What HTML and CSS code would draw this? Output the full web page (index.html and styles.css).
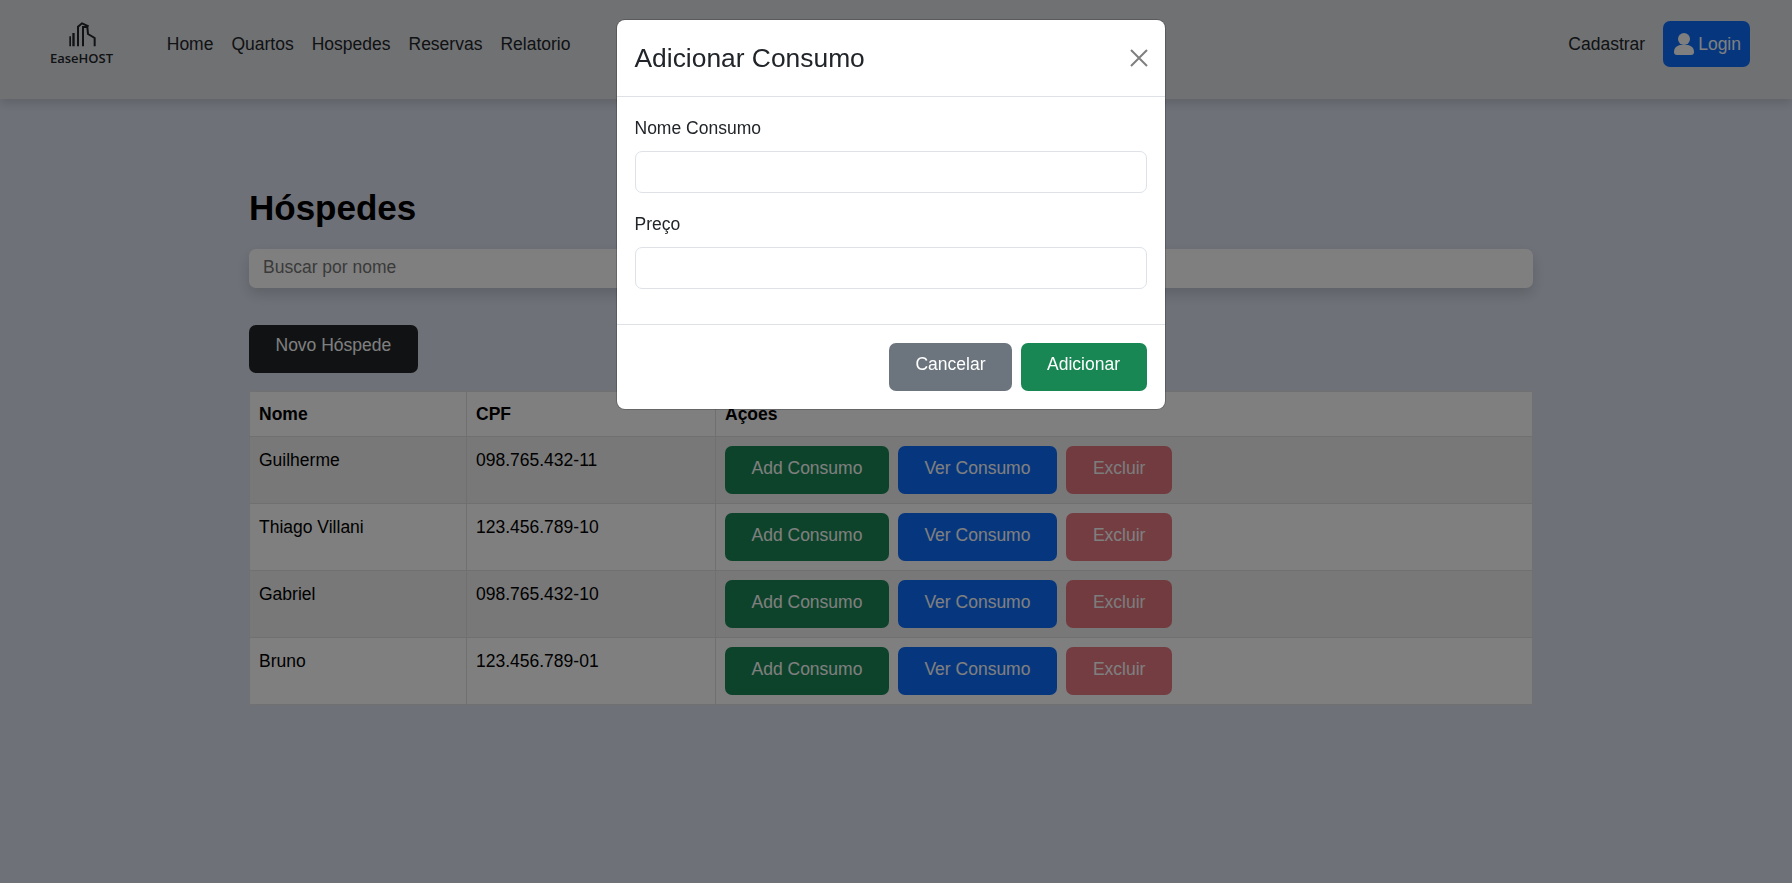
FILE: index.html
```html
<!DOCTYPE html>
<html lang="pt-BR">
<head>
  <meta charset="UTF-8">
  <title>EaseHOST - Hóspedes</title>
  <meta name="viewport" content="width=device-width, initial-scale=1.0">
  <link rel="stylesheet" href="styles.css">
</head>
<body>
  <nav class="navbar">
    <a class="brand" href="#">
      <svg class="brand-icon" viewBox="0 0 90 78" width="30" height="26">
        <path class="brand-bars" d="M7 43h5v30H7zM16 33h7v40h-7z"/>
        <path class="brand-lines" d="M33 73V14L45 4l20 9M48 73V15h13l2 21 20 12v25"/>
      </svg>
      <span class="brand-name">EaseHOST</span>
    </a>
    <ul class="nav-links">
      <li><a href="#">Home</a></li>
      <li><a href="#">Quartos</a></li>
      <li><a href="#">Hospedes</a></li>
      <li><a href="#">Reservas</a></li>
      <li><a href="#">Relatorio</a></li>
    </ul>
    <div class="nav-right">
      <a class="nav-signup" href="#">Cadastrar</a>
      <a class="login" href="#">
        <svg viewBox="0 0 20 22" width="20" height="22"><circle cx="10" cy="6" r="6"/><path d="M0 19c0-5 4-7 7-7h6c3 0 7 2 7 7 0 2-1 3-3 3H3c-2 0-3-1-3-3z"/></svg>
        Login
      </a>
    </div>
  </nav>

  <main class="page">
    <h1>Hóspedes</h1>
    <input class="search" type="text" placeholder="Buscar por nome">
    <button class="btn btn-dark">Novo Hóspede</button>
    <table>
      <thead>
        <tr>
          <th class="col-name">Nome</th>
          <th class="col-cpf">CPF</th>
          <th>Ações</th>
        </tr>
      </thead>
      <tbody>
        <tr>
          <td>Guilherme</td>
          <td>098.765.432-11</td>
          <td class="actions"><button class="btn btn-success-dark">Add Consumo</button><button class="btn btn-primary">Ver Consumo</button><button class="btn btn-danger" disabled>Excluir</button></td>
        </tr>
        <tr>
          <td>Thiago Villani</td>
          <td>123.456.789-10</td>
          <td class="actions"><button class="btn btn-success-dark">Add Consumo</button><button class="btn btn-primary">Ver Consumo</button><button class="btn btn-danger" disabled>Excluir</button></td>
        </tr>
        <tr>
          <td>Gabriel</td>
          <td>098.765.432-10</td>
          <td class="actions"><button class="btn btn-success-dark">Add Consumo</button><button class="btn btn-primary">Ver Consumo</button><button class="btn btn-danger" disabled>Excluir</button></td>
        </tr>
        <tr>
          <td>Bruno</td>
          <td>123.456.789-01</td>
          <td class="actions"><button class="btn btn-success-dark">Add Consumo</button><button class="btn btn-primary">Ver Consumo</button><button class="btn btn-danger" disabled>Excluir</button></td>
        </tr>
      </tbody>
    </table>
  </main>

  <div class="backdrop">
    <div class="modal">
      <div class="modal-header">
        <h4>Adicionar Consumo</h4>
        <button class="close" aria-label="Fechar">
          <svg viewBox="0 0 18 18" width="18" height="18"><path d="M1 1l16 16M17 1L1 17"/></svg>
        </button>
      </div>
      <div class="modal-body">
        <label for="nome">Nome Consumo</label>
        <input id="nome" type="text">
        <label for="preco">Preço</label>
        <input id="preco" type="text">
      </div>
      <div class="modal-footer">
        <button class="btn btn-secondary">Cancelar</button>
        <button class="btn btn-success">Adicionar</button>
      </div>
    </div>
  </div>
</body>
</html>
```

FILE: styles.css
```css
* { box-sizing: border-box; }
body { font-family: "Liberation Sans", Arial, sans-serif; font-size: 17.5px; line-height: 26px; margin: 0; min-height: 883px; padding-right: 10px; background: #dee3f1; color: #000; }
a { color: inherit; text-decoration: none; }

.navbar { display: flex; align-items: center; height: 99px; margin-right: -10px; padding: 0 42px 11px 50px; background: #e1e2e7; color: #212529; box-shadow: 0 4px 10px rgba(0, 0, 0, 0.15); }
.brand { display: flex; flex-direction: column; align-items: center; width: 63px; margin-right: 45px; color: #212529; }
.brand-icon { display: block; margin-top: -2px; }
.brand-bars { fill: #212529; }
.brand-lines { fill: none; stroke: #212529; stroke-width: 6; }
.brand-name { font-family: "Open Sans", sans-serif; font-size: 13px; font-weight: 600; line-height: 14px; margin-top: 3px; white-space: nowrap; }
.nav-links { display: flex; list-style: none; margin: 0; padding: 0; }
.nav-links a { display: block; padding: 0 9px; }
.nav-links li:first-child a { padding-left: 8.75px; }
.nav-right { display: flex; align-items: center; gap: 18px; margin-left: auto; }
.login { display: flex; align-items: center; gap: 4px; height: 46px; padding: 0 9px 0 11px; border-radius: 7px; background: #0d6efd; color: #fff; }
.login svg { fill: currentColor; }

.page { width: 1284px; margin: 0 auto; padding-top: 88px; }
h1 { font-size: 35px; line-height: 42px; margin: 0 0 20px; }
.search { display: block; width: 100%; height: 39px; margin-bottom: 37px; padding: 0 14px 2px; border: 0; border-radius: 7px; background: #fff; font: inherit; box-shadow: 0 6px 14px rgba(0, 0, 0, 0.15); }
.search::placeholder { color: #757575; }

.btn { height: 48px; padding: 0 26.5px 6px; border: 0; border-radius: 7px; font: inherit; color: #fff; cursor: pointer; }
.btn-dark { background: #212529; padding-bottom: 8px; }
.btn-success, .btn-success-dark { background: #198754; }
.btn-primary { background: #0d6efd; }
.btn-danger { background: #dc3545; padding-left: 27px; padding-right: 27px; }
.btn-danger:disabled { opacity: 0.65; cursor: default; }
.btn-secondary { background: #6c757d; padding-left: 26px; padding-right: 26px; }

table { width: 100%; margin-top: 18px; border-collapse: collapse; background: #fff; }
th, td { padding: 9px; border: 1px solid #e0e0e0; text-align: left; vertical-align: top; }
th { height: 45px; }
td { height: 67px; padding-top: 10px; }
tbody tr:nth-child(odd) { background: #f0f0f0; }
.col-name { width: 217px; }
.col-cpf { width: 249px; }
.actions { padding-top: 9px; }
.actions .btn { margin-right: 9px; padding-bottom: 4px; }

.backdrop { position: fixed; inset: 0; display: flex; justify-content: center; align-items: flex-start; padding: 20px 10px 0 0; background: rgba(0, 0, 0, 0.5); }
.modal { width: 548px; border-radius: 8px; background: #fff; color: #212529; box-shadow: 0 0 0 1px rgba(0, 0, 0, 0.2); }
.modal-header { display: flex; align-items: center; justify-content: space-between; height: 77px; padding: 0 17.5px; border-bottom: 1px solid #dee2e6; }
.modal-header h4 { font-size: 26.4px; font-weight: 400; line-height: 32px; margin: 0; }
.close { display: flex; padding: 0; border: 0; background: none; cursor: pointer; }
.close path { fill: none; stroke: #000; stroke-opacity: 0.5; stroke-width: 2; }
.modal-body { padding: 17.5px 18.5px 35px 17.5px; }
.modal-body label { display: block; margin-bottom: 10px; }
.modal-body input { display: block; width: 100%; height: 42px; margin-bottom: 18px; border: 1px solid #dee2e6; border-radius: 7px; background: #fff; }
.modal-body input:last-child { margin-bottom: 0; }
.modal-footer { display: flex; justify-content: flex-end; gap: 9px; padding: 18px 18.5px 18px 17.5px; border-top: 1px solid #dee2e6; }
```
